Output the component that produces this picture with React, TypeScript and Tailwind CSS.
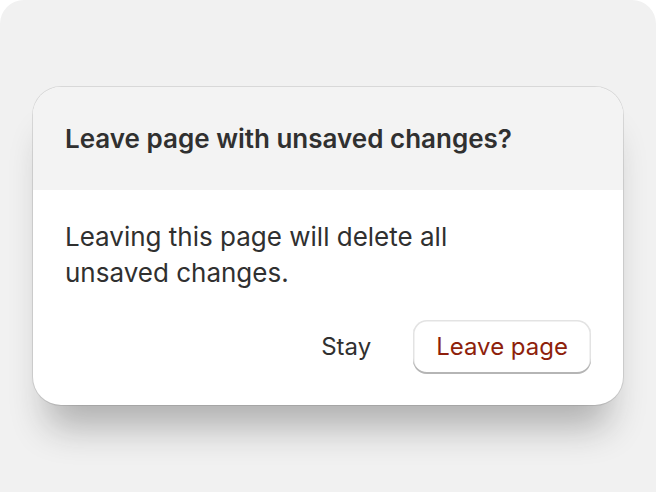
import React from "react";

export default function App() {
  return (
    <div className="w-[656px] h-[492px] bg-white overflow-hidden" style={{ fontFamily: "Inter, 'Noto Sans', sans-serif" }}>
      <div className="w-full h-full rounded-t-[24px] bg-[#f1f1f1] flex items-center justify-center">
        <div className="w-[590px] rounded-[28px] overflow-hidden bg-white shadow-[0_36px_36px_-14px_rgba(26,26,26,0.30),0_0_0_1px_rgba(0,0,0,0.10)]">
          <div className="h-[103px] bg-[#f3f3f3] flex items-center px-[32px]">
            <h2 className="text-[26px] leading-[36px] font-semibold text-[#303030]">
              Leave page with unsaved changes?
            </h2>
          </div>
          <div className="px-[32px] pt-[29px] pb-[31px]">
            <p className="text-[26px] leading-[36px] text-[#303030] w-[420px]">
              Leaving this page will delete all unsaved changes.
            </p>
            <div className="mt-[29px] flex justify-end items-center gap-[18px]">
              <button className="h-[54px] px-[24px] text-[24px] text-[#303030] rounded-[14px]">
                Stay
              </button>
              <button className="h-[54px] px-[23px] text-[24px] text-[#8e1f0b] bg-white rounded-[14px] shadow-[inset_0_-2px_0_0_#b5b5b5,inset_0_0_0_1.5px_#e3e3e3]">
                Leave page
              </button>
            </div>
          </div>
        </div>
      </div>
    </div>
  );
}
